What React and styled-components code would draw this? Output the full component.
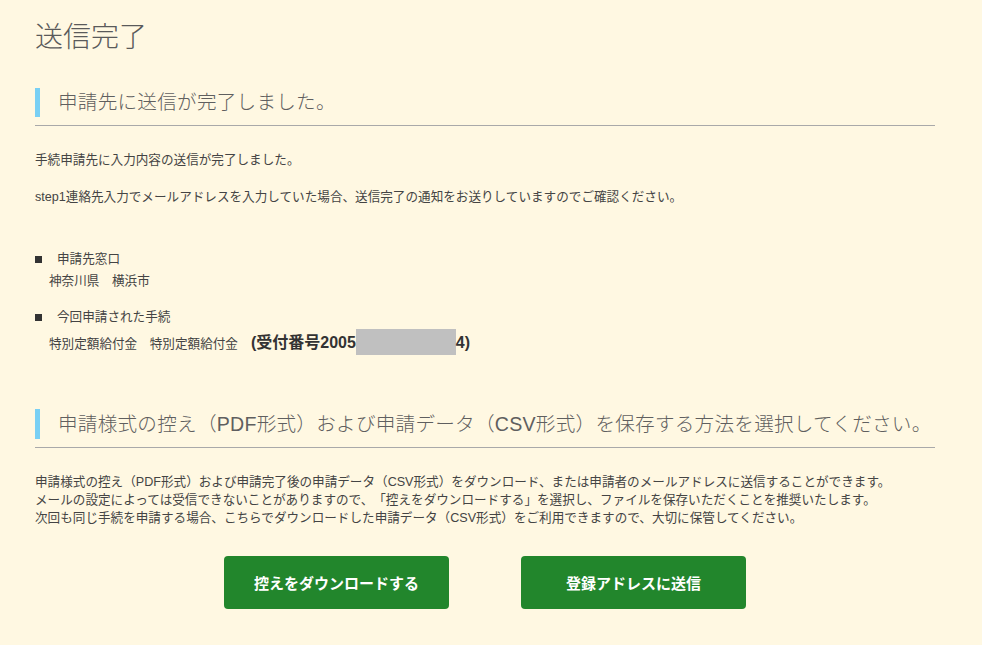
import styled, { createGlobalStyle } from "styled-components";

const GlobalStyle = createGlobalStyle`
  html, body {
    margin: 0;
    padding: 0;
    background: #fff8e2;
  }
  body {
    font-family: "Liberation Sans", "Noto Sans CJK JP", sans-serif;
    color: #444;
    text-spacing-trim: space-all;
  }
`;

const Page = styled.div`
  width: 900px;
  padding: 20px 47px 40px 35px;
`;

const Title = styled.h1`
  margin: 0;
  font-size: 28px;
  line-height: 36px;
  font-weight: 300;
  color: #5a5a5a;
`;

const Section = styled.section`
  margin-top: ${(p) => p.$top || 0}px;
`;

const HeadingWrap = styled.div`
  padding-bottom: 8px;
  border-bottom: 1px solid #a9a9a9;
`;

const Heading = styled.h2`
  margin: 0;
  border-left: 5px solid #79d0f4;
  padding-left: 18px;
  font-size: 19.6px;
  line-height: ${(p) => p.$h || 29}px;
  font-weight: 300;
  letter-spacing: 0.25px;
  color: #5f5f5f;
  white-space: nowrap;
`;

const Text = styled.p`
  margin: ${(p) => p.$top || 0}px 0 0;
  font-size: 12.6px;
  line-height: 18px;
  color: #444;
`;

const Item = styled.div`
  margin-top: ${(p) => p.$top || 0}px;
`;

const ItemHead = styled.div`
  display: flex;
  align-items: center;
  font-size: 12.6px;
  line-height: 18px;
  color: #444;
`;

const Bullet = styled.span`
  width: 7px;
  height: 7px;
  background: #333;
  margin-right: 15px;
`;

const ItemBody = styled.div`
  margin-top: ${(p) => p.$top || 0}px;
  padding-left: 14px;
  font-size: 12.6px;
  line-height: ${(p) => p.$lh || 18}px;
  color: #444;
`;

const Receipt = styled.strong`
  margin-left: 13px;
  font-size: 16px;
  font-weight: 700;
  color: #333;
`;

const Masked = styled.span`
  display: inline-block;
  width: 100px;
  height: 26px;
  background: #c0c0c0;
  vertical-align: middle;
  margin-top: -3px;
`;

const ButtonRow = styled.div`
  display: flex;
  justify-content: center;
  gap: 72px;
  margin-top: 29px;
`;

const Button = styled.button`
  width: 225px;
  height: 53px;
  border: none;
  border-radius: 4px;
  background: #22862c;
  color: #fff;
  font-family: "Noto Sans CJK JP", sans-serif;
  font-size: 15px;
  font-weight: 700;
  cursor: pointer;
`;

export default function App() {
  return (
    <>
      <GlobalStyle />
      <Page>
        <Title>送信完了</Title>

        <Section $top={32}>
          <HeadingWrap>
            <Heading>申請先に送信が完了しました。</Heading>
          </HeadingWrap>
          <Text $top={25}>手続申請先に入力内容の送信が完了しました。</Text>
          <Text $top={19}>
            step1連絡先入力でメールアドレスを入力していた場合、送信完了の通知をお送りしていますのでご確認ください。
          </Text>

          <Item $top={44}>
            <ItemHead>
              <Bullet />
              申請先窓口
            </ItemHead>
            <ItemBody $top={4}>神奈川県　横浜市</ItemBody>
          </Item>

          <Item $top={18}>
            <ItemHead>
              <Bullet />
              今回申請された手続
            </ItemHead>
            <ItemBody $top={5} $lh={24}>
              特別定額給付金　特別定額給付金
              <Receipt>
                (受付番号2005
                <Masked />
                4)
              </Receipt>
            </ItemBody>
          </Item>
        </Section>

        <Section $top={53}>
          <HeadingWrap>
            <Heading $h={30}>
              申請様式の控え（PDF形式）および申請データ（CSV形式）を保存する方法を選択してください。
            </Heading>
          </HeadingWrap>
          <Text $top={25}>
            申請様式の控え（PDF形式）および申請完了後の申請データ（CSV形式）をダウンロード、または申請者のメールアドレスに送信することができます。
            <br />
            メールの設定によっては受信できないことがありますので、「控えをダウンロードする」を選択し、ファイルを保存いただくことを推奨いたします。
            <br />
            次回も同じ手続を申請する場合、こちらでダウンロードした申請データ（CSV形式）をご利用できますので、大切に保管してください。
          </Text>
          <ButtonRow>
            <Button>控えをダウンロードする</Button>
            <Button>登録アドレスに送信</Button>
          </ButtonRow>
        </Section>
      </Page>
    </>
  );
}
